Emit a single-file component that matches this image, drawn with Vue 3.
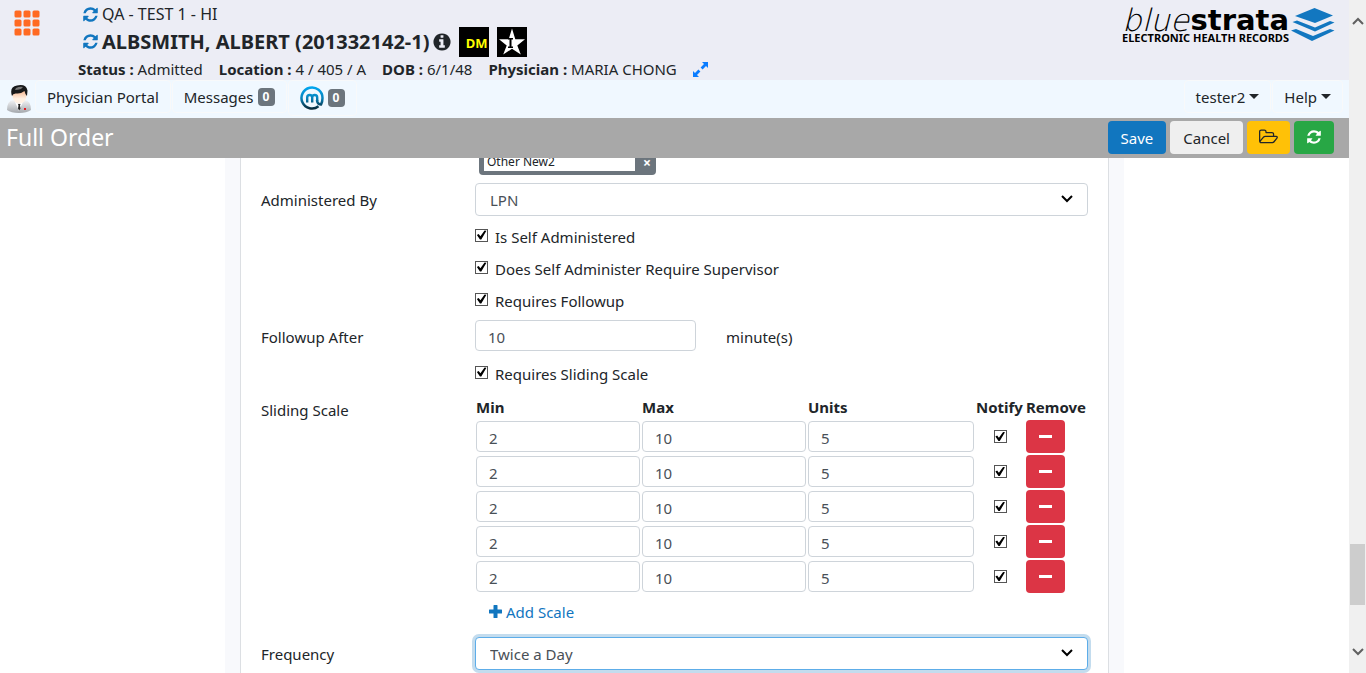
<script setup>
import { ref } from 'vue'

const administeredBy = ref('LPN')
const frequency = ref('Twice a Day')
const followup = ref('10')
const flags = ref([
  { id: 'self', label: 'Is Self Administered', on: true },
  { id: 'supervisor', label: 'Does Self Administer Require Supervisor', on: true },
  { id: 'followup', label: 'Requires Followup', on: true }
])
const needsScale = ref(true)
const scales = ref(
  Array.from({ length: 5 }, () => ({ min: '2', max: '10', units: '5', notify: true }))
)
const removeScale = (i) => scales.value.splice(i, 1)
const addScale = () => scales.value.push({ min: '', max: '', units: '', notify: false })

const refreshPath =
  'M1639 1056q0 5-1 7-64 268-268 434.5t-478 166.5q-146 0-282.5-55t-243.5-157l-129 129q-19 19-45 19t-45-19-19-45v-448q0-26 19-45t45-19h448q26 0 45 19t19 45-19 45l-137 137q71 66 161 102t187 36q134 0 250-65t186-179q11-17 53-117 8-23 30-23h192q13 0 22.5 9.5t9.5 22.5zm25-800v448q0 26-19 45t-45 19h-448q-26 0-45-19t-19-45 19-45l138-138q-148-137-349-137-134 0-250 65t-186 179q-11 17-53 117-8 23-30 23h-199q-13 0-22.5-9.5t-9.5-22.5v-7q65-268 270-434.5t480-166.5q146 0 284 55.5t245 156.5l130-129q19-19 45-19t45 19 19 45z'
</script>

<template>
  <div class="page">
    <div class="content">
      <header class="top">
        <button class="apps" aria-label="Applications">
          <svg viewBox="0 0 26 26" width="26" height="26" fill="#ff6a22">
            <template v-for="r in 3" :key="r">
              <rect v-for="c in 3" :key="c" :x="(c - 1) * 9 + 0.5" :y="(r - 1) * 9 + 0.5" width="7" height="7" rx="1.5" />
            </template>
          </svg>
        </button>
        <div class="patient">
          <div class="line facility">
            <button class="icon-btn" aria-label="Change facility">
              <svg viewBox="0 0 1792 1792" width="17" height="17" fill="#1176bf"><path :d="refreshPath" /></svg>
            </button>
            <span>QA - TEST 1 - HI</span>
          </div>
          <div class="line name">
            <button class="icon-btn" aria-label="Change patient">
              <svg viewBox="0 0 1792 1792" width="17" height="17" fill="#1176bf"><path :d="refreshPath" /></svg>
            </button>
            <h1>ALBSMITH, ALBERT (201332142-1)</h1>
            <svg class="info" viewBox="0 0 1792 1792" width="20" height="20" fill="#212529">
              <path d="M1152 1376v-160q0-14-9-23t-23-9h-96v-512q0-14-9-23t-23-9h-320q-14 0-23 9t-9 23v160q0 14 9 23t23 9h96v320h-96q-14 0-23 9t-9 23v160q0 14 9 23t23 9h448q14 0 23-9t9-23zm-128-896v-160q0-14-9-23t-23-9h-192q-14 0-23 9t-9 23v160q0 14 9 23t23 9h192q14 0 23-9t9-23zm640 416q0 209-103 385.5t-279.5 279.5-385.5 103-385.5-103-279.5-279.5-103-385.5 103-385.5 279.5-279.5 385.5-103 385.5 103 279.5 279.5 103 385.5z" />
            </svg>
            <span class="flag dm">DM</span>
            <span class="flag">
              <svg viewBox="0 0 30 30" width="30" height="30">
                <path d="M15 1.500l3.300 10.700H28l-7.700 6.200 3.500 9.200L15 21.800 6.200 27.600l3.500-9.200L2 12.200h9.700z" fill="#fff" />
                <path d="M11 11h5v1.500h-1.500v7H16V21h-5v-1.500h1.500v-7H11z" fill="#000" />
              </svg>
            </span>
          </div>
          <div class="line details">
            <span><b>Status :</b> Admitted</span>
            <span><b>Location :</b> 4 / 405 / A</span>
            <span><b>DOB :</b> 6/1/48</span>
            <span><b>Physician :</b> MARIA CHONG</span>
            <button class="icon-btn expand" aria-label="Expand details">
              <svg viewBox="0 0 15 15" width="15" height="15" fill="#0a7cff">
                <path d="M9 0h6v6l-2-2-3.400 3.400-2-2L11 2zM0 9l2 2 3.400-3.400 2 2L4 13l2 2H0z" />
              </svg>
            </button>
          </div>
        </div>
        <div class="brand">
          <div class="brand-text">
            <div class="wordmark"><i>blue</i><b>strata</b></div>
            <div class="tagline">ELECTRONIC HEALTH RECORDS</div>
          </div>
          <svg viewBox="0 0 44 34" width="44" height="34" fill="#1277c0">
            <path d="M23.500 0L42 7.500 24 15 4 8z" />
            <path d="M1.500 14L6 12.500l18 7L39 13l4.500 1.500L24 23.500z" />
            <path d="M0 22.500L5 21l17 7 17-7 4.500 1.500L21 33z" />
          </svg>
        </div>
      </header>

      <nav class="nav">
        <svg class="doctor" viewBox="0 0 26 30" width="26" height="30">
          <defs>
            <linearGradient id="coat" x1="0" y1="0" x2="0" y2="1">
              <stop offset="0" stop-color="#f3f4f6" /><stop offset="1" stop-color="#a3a7ac" />
            </linearGradient>
            <linearGradient id="skin" x1="0" y1="0" x2="0" y2="1">
              <stop offset="0" stop-color="#ef9d6c" /><stop offset=".7" stop-color="#fff1e4" />
            </linearGradient>
          </defs>
          <path d="M1 26q0-9 6-10l6 3 6-3q6 1 6 10-4 3-12 3T1 26z" fill="url(#coat)" />
          <path d="M9 18l4 9 4-9-4 2z" fill="#fff" />
          <path d="M12 20h2.500l-.5 1.500.500 3-1.300 2-1.200-2 .5-3z" fill="#222" />
          <ellipse cx="13.500" cy="11.500" rx="7" ry="8" fill="url(#skin)" />
          <path d="M6 12Q3 3 11 1.500q9-2 10.500 5L21 12q-2-2-2.500-5-4 3-8 2.500Q7 9 6 12z" fill="#17191b" />
          <path d="M10 4q4-2 7-1l-2 2q-3 1-6 1z" fill="#777" />
          <path d="M18 24h2v2h-2z" fill="#e01b24" />
        </svg>
        <a class="nav-item portal" href="#">Physician Portal</a>
        <a class="nav-item messages" href="#">Messages <span class="badge">0</span></a>
        <a class="nav-item mail" href="#" aria-label="Secure mail">
          <svg viewBox="0 0 24 24" width="24" height="24" fill="none">
            <defs>
              <linearGradient id="ring" gradientUnits="userSpaceOnUse" x1="0" y1="0" x2="0" y2="24">
                <stop offset="0" stop-color="#00a9f4" /><stop offset=".5" stop-color="#0884bd" /><stop offset="1" stop-color="#08202c" />
              </linearGradient>
            </defs>
            <g stroke="url(#ring)">
              <path d="M18.500 20.200A10.500 10.500 0 1 1 22.500 12q0 4-1.500 6.500-4-.5-4-4.500" stroke-width="2.500" />
              <path d="M7.200 16.500v-5q0-2.500 2.500-2.500t2.500 2.500v5m0-5q0-2.500 2.500-2.500t2.500 2.500v3.500" stroke-width="2.400" />
            </g>
          </svg>
          <span class="badge">0</span>
        </a>
        <div class="spacer"></div>
        <button class="nav-item user">tester2 <span class="caret"></span></button>
        <button class="nav-item help">Help <span class="caret"></span></button>
      </nav>

      <div class="titlebar">
        <h2>Full Order</h2>
        <button class="btn save">Save</button>
        <button class="btn cancel">Cancel</button>
        <button class="btn open" aria-label="Open">
          <svg viewBox="0 0 1920 1792" width="19" height="18" fill="#212529">
            <path transform="translate(0 128)" d="M1781 803q0-35-53-35h-1088q-40 0-85.500 21.500t-71.500 52.500l-294 363q-18 24-18 40 0 35 53 35h1088q40 0 86-22t71-53l294-363q18-22 18-39zm-1141-163h768v-160q0-40-28-68t-68-28h-576q-40 0-68-28t-28-68v-64q0-40-28-68t-68-28h-320q-40 0-68 28t-28 68v853l256-315q44-53 116-87.500t140-34.500zm1269 163q0 62-46 120l-295 363q-43 53-116 87.500t-140 34.500h-1088q-92 0-158-66t-66-158v-960q0-92 66-158t158-66h320q92 0 158 66t66 158v32h544q92 0 158 66t66 158v160h192q54 0 99 24.500t67 70.500q15 32 15 68z" />
          </svg>
        </button>
        <button class="btn reload" aria-label="Reload">
          <svg viewBox="0 0 1792 1792" width="16" height="16" fill="#fff"><path :d="refreshPath" /></svg>
        </button>
      </div>

      <main class="scroll">
        <div class="panel">
          <form class="card" @submit.prevent>
            <div class="row">
              <span></span>
              <div class="tag">
                <span class="tag-text">Other New2</span>
                <button type="button" class="tag-x" aria-label="Remove Other New2">×</button>
              </div>
            </div>

            <div class="row">
              <label for="administered">Administered By</label>
              <div class="select">
                <select id="administered" v-model="administeredBy"><option>LPN</option></select>
                <svg viewBox="0 0 12 8" width="12" height="8"><path d="M1 1l5 5 5-5" /></svg>
              </div>
            </div>

            <div class="row checks">
              <span></span>
              <div>
                <div v-for="f in flags" :key="f.id" class="check">
                  <input :id="f.id" v-model="f.on" type="checkbox" />
                  <label :for="f.id">{{ f.label }}</label>
                </div>
              </div>
            </div>

            <div class="row">
              <label for="after" class="after-label">Followup After</label>
              <div class="after">
                <input id="after" v-model="followup" class="text" type="text" />
                <span>minute(s)</span>
              </div>
            </div>

            <div class="row scale-check">
              <span></span>
              <div class="check">
                <input id="sliding" v-model="needsScale" type="checkbox" />
                <label for="sliding">Requires Sliding Scale</label>
              </div>
            </div>

            <div class="row top-aligned">
              <span class="scale-label">Sliding Scale</span>
              <div>
                <table>
                  <thead>
                    <tr>
                      <th>Min</th><th>Max</th><th class="c-units">Units</th>
                      <th class="c-notify">Notify</th><th class="c-remove">Remove</th>
                    </tr>
                  </thead>
                  <tbody>
                    <tr v-for="(s, i) in scales" :key="i">
                      <td><input v-model="s.min" class="text" type="text" aria-label="Min" /></td>
                      <td><input v-model="s.max" class="text" type="text" aria-label="Max" /></td>
                      <td><input v-model="s.units" class="text" type="text" aria-label="Units" /></td>
                      <td class="center"><input v-model="s.notify" type="checkbox" aria-label="Notify" /></td>
                      <td>
                        <button type="button" class="remove" aria-label="Remove" @click="removeScale(i)">
                          <span></span>
                        </button>
                      </td>
                    </tr>
                  </tbody>
                </table>
                <button type="button" class="add" @click="addScale">
                  <svg viewBox="0 0 13 13" width="13" height="13" fill="#1176bf">
                    <path d="M5 0h3q.5 0 .5.500v4h4q.5 0 .5.500v3q0 .5-.5.500h-4v4q0 .5-.5.500H5q-.5 0-.5-.5v-4h-4Q0 8.500 0 8V5q0-.5.500-.5h4v-4Q4.500 0 5 0z" />
                  </svg>
                  <span>Add Scale</span>
                </button>
              </div>
            </div>

            <div class="row">
              <label for="frequency">Frequency</label>
              <div class="select active">
                <select id="frequency" v-model="frequency"><option>Twice a Day</option></select>
                <svg viewBox="0 0 12 8" width="12" height="8"><path d="M1 1l5 5 5-5" /></svg>
              </div>
            </div>
          </form>
        </div>
      </main>
    </div>

    <div class="scrollbar" aria-hidden="true">
      <svg viewBox="0 0 12 8" width="12" height="8"><path d="M1 7l5-5 5 5" /></svg>
      <div class="track"><div class="thumb"></div></div>
      <svg viewBox="0 0 12 8" width="12" height="8"><path d="M1 1l5 5 5-5" /></svg>
    </div>
  </div>
</template>

<style>
body {
  overflow: hidden;
}
</style>

<style scoped>
.page {
  display: flex;
  height: 100vh;
  overflow: hidden;
  background: #fff;
  color: #212529;
  font: 15px/24px "Noto Sans", "Open Sans", sans-serif;
}
.page *,
.page *::before {
  box-sizing: border-box;
}
.content {
  flex: 1;
  min-width: 0;
  display: flex;
  flex-direction: column;
}
button,
input,
select {
  font: inherit;
  color: inherit;
  margin: 0;
}
button {
  border: 0;
  padding: 0;
  background: none;
  cursor: pointer;
}
svg {
  display: block;
  flex: none;
}

/* header */
.top {
  flex: none;
  display: flex;
  align-items: flex-start;
  height: 80px;
  background: #ecedf5;
}
.apps {
  margin: 10px 0 0 14px;
}
.patient {
  flex: 1;
  padding: 2px 0 0 38px;
}
.line {
  display: flex;
  align-items: center;
  white-space: nowrap;
}
.facility {
  height: 24px;
  padding-left: 4px;
  gap: 3px;
  font-size: 16px;
}
.name {
  height: 31px;
  padding-left: 4px;
  gap: 3px;
}
.name h1 {
  margin: 0;
  font-size: 20px;
  font-weight: 700;
}
.flag {
  width: 30px;
  height: 30px;
  margin-left: 4px;
  background: #000;
}
.flag + .flag {
  margin-left: 5px;
}
.dm {
  padding: 4px 2px 0 0;
  color: #ff0;
  text-align: right;
  font: 700 13px/24px "Noto Sans", sans-serif;
}
.details {
  height: 24px;
  gap: 16px;
}
.brand {
  display: flex;
  padding: 8px 14px 0 0;
  gap: 2px;
  color: #000;
}
.wordmark {
  display: flex;
  justify-content: space-between;
  font: 29px/24px "DejaVu Sans", sans-serif;
}
.wordmark i {
  font-family: "DejaVu Sans Light", "DejaVu Sans ExtraLight", Inter, sans-serif;
  font-size: 31px;
  font-weight: 100;
}
.tagline {
  margin-top: 1px;
  font: 700 11px/10px "Noto Sans", sans-serif;
}

/* navigation */
.nav {
  flex: none;
  display: flex;
  height: 38px;
  padding: 0 5px 0 6px;
  background: #f0f8ff;
}
.doctor {
  margin-top: 4px;
}
.nav-item {
  display: flex;
  align-items: center;
  gap: 4px;
  height: 33px;
  margin-right: 1px;
  padding: 0 11px;
  border: 1px solid #f8f9fa;
  border-radius: 4px;
  color: #212529;
  text-decoration: none;
}
.portal {
  margin-left: 3px;
}
.mail {
  height: 36px;
}
.badge {
  width: 17px;
  height: 18px;
  border-radius: 4px;
  background: #6c757d;
  color: #fff;
  text-align: center;
  font-size: 12px;
  font-weight: 700;
  line-height: 18px;
}
.spacer {
  flex: 1;
}
.caret {
  border: 5px solid transparent;
  border-top-color: #212529;
  border-bottom: 0;
}

/* title bar */
.titlebar {
  flex: none;
  display: flex;
  align-items: center;
  height: 40px;
  padding: 0 15px 2px 6px;
  background: #a8a8a8;
}
.titlebar h2 {
  flex: 1;
  margin: 0;
  color: #fff;
  font-size: 23px;
  font-weight: 400;
}
.btn {
  display: flex;
  align-items: center;
  justify-content: center;
  height: 33px;
  margin-left: 4px;
  padding: 0 12px;
  border-radius: 4px;
}
.save,
.cancel {
  padding: 2px 13px 0;
}
.save {
  background: #1176bf;
  color: #fff;
}
.cancel {
  background: #efefef;
}
.open {
  background: #ffc107;
}
.reload {
  background: #28a745;
}

/* form */
.scroll {
  flex: 1;
  min-height: 0;
  overflow: hidden;
}
.panel {
  max-width: 899px;
  margin: 0 auto;
  padding: 0 15px;
  background: #f8f9fc;
}
.card {
  padding: 0 20px 20px;
  border: solid #dcdfe3;
  border-width: 0 1px;
  background: #fff;
}
.row {
  display: grid;
  grid-template-columns: 214px 1fr;
  align-items: center;
}
.top-aligned {
  align-items: start;
}
.tag {
  display: flex;
  width: 177px;
  height: 27px;
  margin: -10px 0 8px 4px;
  padding: 0 0 4px 5px;
  border-radius: 4px;
  background: #6c757d;
}
.tag-text {
  flex: 1;
  padding: 2px 3px 0;
  background: #fff;
  font-size: 12px;
}
.tag-x {
  width: 21px;
  padding: 3px 0 0 3px;
  color: #fff;
  font-size: 14px;
  font-weight: 700;
}
.select {
  position: relative;
}
.select select {
  display: block;
  width: 100%;
  height: 33px;
  padding: 0 14px;
  appearance: none;
  border: 1px solid #ced4da;
  border-radius: 4px;
  background: #fff;
  color: #495057;
}
.select svg {
  position: absolute;
  top: 12px;
  right: 15px;
  pointer-events: none;
}
.select path {
  fill: none;
  stroke: #000;
  stroke-width: 2;
}
.active select {
  border-color: #5dade9;
  box-shadow: 0 0 0 3px #c3dcee;
}
.checks {
  margin: 4px 0;
}
.check {
  display: flex;
  align-items: center;
  gap: 7px;
  height: 32px;
}
.check label {
  padding-top: 2px;
}
input[type='checkbox'] {
  display: block;
  width: 13px;
  height: 13px;
  appearance: none;
  border: 1px solid #555;
  background: #fff;
}
.check input {
  margin-bottom: 2px;
}
input[type='checkbox']:checked::before {
  content: '';
  display: block;
  height: 100%;
  background: #000;
  clip-path: polygon(8% 50%, 24% 42%, 40% 62%, 78% 8%, 95% 12%, 48% 92%, 36% 92%);
}
.after {
  display: grid;
  grid-template-columns: 221px 1fr;
  gap: 30px;
  align-items: center;
}
.after-label,
.after span {
  padding-top: 2px;
}
.text {
  display: block;
  width: 100%;
  height: 31px;
  padding: 2px 12px 0;
  border: 1px solid #ced4da;
  border-radius: 4px;
  background: #fff;
  color: #495057;
}
.scale-check {
  margin: 6px 0;
}
.scale-label {
  padding-top: 3px;
}
table {
  width: calc(100% + 2px);
  margin: 0 -1px;
  table-layout: fixed;
  border-spacing: 2px;
}
th,
td {
  padding: 0;
  text-align: left;
}
th {
  height: 21px;
  line-height: 21px;
}
.c-units {
  width: 166px;
}
.c-notify {
  width: 48px;
}
.c-remove {
  width: 61px;
}
.center input {
  margin: 0 auto;
}
.remove {
  display: flex;
  align-items: center;
  justify-content: center;
  width: 39px;
  height: 33px;
  border-radius: 4px;
  background: #dc3545;
}
.remove span {
  width: 13px;
  height: 3px;
  background: #fff;
}
.add {
  display: flex;
  align-items: center;
  gap: 4px;
  height: 33px;
  margin: 0 0 9px 14px;
  color: #1176bf;
}

/* scrollbar */
.scrollbar {
  flex: none;
  display: flex;
  flex-direction: column;
  align-items: center;
  width: 17px;
  padding: 17px 0;
  background: #f0f0f0;
}
.scrollbar path {
  fill: none;
  stroke: #606060;
  stroke-width: 2;
}
.track {
  flex: 1;
  display: flex;
  flex-direction: column;
  justify-content: flex-end;
  width: 15px;
  padding-bottom: 43px;
}
.thumb {
  height: 61px;
  background: #cdcdcd;
}
</style>
